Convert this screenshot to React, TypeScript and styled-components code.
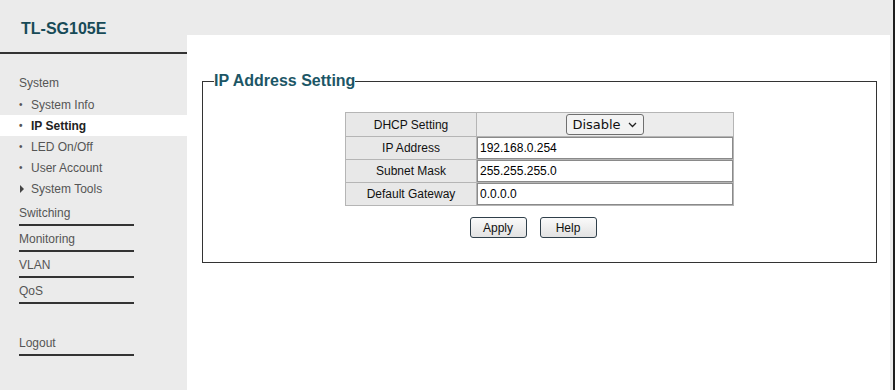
import styled, { createGlobalStyle } from "styled-components";

const GlobalStyle = createGlobalStyle`
    html, body {
        margin: 0;
        padding: 0;
        background: #ebebeb;
    }
    body {
        font-family: "Liberation Sans", Arial, sans-serif;
        font-size: 12px;
        color: #333;
    }
`

const Page = styled.div`
    display: grid;
    grid-template-columns: 187px 1fr;
    height: 390px;
    border-right: 2px solid #1e1e1e;
    box-sizing: border-box;
`

const Sidebar = styled.nav`
    background: #ebebeb;
`

const Brand = styled.div`
    height: 54px;
    box-sizing: border-box;
    padding: 20px 0 0 21px;
    border-bottom: 2px solid #333;
    font-size: 16px;
    font-weight: bold;
    color: #174a57;
`

const Menu = styled.ul`
    list-style: none;
    margin: 0;
    padding: 19px 0 0 0;
`

const Section = styled.li<{ $line?: boolean; $gap?: number }>`
    margin: ${(p) => p.$gap ?? 0}px 0 0 19px;
    width: 115px;
    height: ${(p) => (p.$line ? 23 : 21)}px;
    line-height: 20px;
    font-size: 12px;
    color: #555;
    border-bottom: ${(p) => (p.$line ? "2px solid #333" : "none")};
    box-sizing: border-box;
`

const Item = styled.li<{ $active?: boolean }>`
    display: flex;
    align-items: center;
    height: 21px;
    padding-left: 19px;
    font-size: 12px;
    color: ${(p) => (p.$active ? "#222" : "#555")};
    font-weight: ${(p) => (p.$active ? "bold" : "normal")};
    background: ${(p) => (p.$active ? "#fff" : "transparent")};
`

const Bullet = styled.span`
    width: 12px;
    font-size: 10px;
    color: #555;
`

const Arrow = styled.span`
    width: 12px;
    display: inline-flex;
    align-items: center;
    &::before {
        content: "";
        border-left: 4px solid #444;
        border-top: 4px solid transparent;
        border-bottom: 4px solid transparent;
        margin-left: 1px;
    }
`

const Main = styled.main`
    margin: 35px 3px 0 0;
    background: #fff;
    padding: 37px 13px 0 15px;
`

const Fieldset = styled.fieldset`
    margin: 0;
    padding: 22px 0 24px 0;
    border: 1px solid #333;
    display: flex;
    flex-direction: column;
    align-items: center;
`

const Legend = styled.legend`
    margin-left: 11px;
    padding: 0;
    font-size: 16px;
    font-weight: bold;
    color: #1c5666;
`

const Table = styled.table`
    border-collapse: collapse;
    border: 1px solid #a9a9a9;
    width: 389px;
`

const Label = styled.td`
    width: 130px;
    height: 22px;
    padding: 0;
    text-align: center;
    background: #e8e8e8;
    border: 1px solid #b5b5b5;
    color: #111;
    font-size: 12px;
`

const Value = styled.td<{ $center?: boolean }>`
    padding: 0;
    border: 1px solid #b5b5b5;
    background: #ececec;
    text-align: ${(p) => (p.$center ? "center" : "left")};
`

const Field = styled.input`
    display: block;
    width: 100%;
    height: 22px;
    box-sizing: border-box;
    margin: 0;
    padding: 0 2px;
    border: 1px solid #8a8a8a;
    background: #fff;
    font-family: "Liberation Sans", Arial, sans-serif;
    font-size: 12px;
    color: #000;
    outline: none;
`

const Select = styled.div`
    display: inline-flex;
    align-items: center;
    gap: 7px;
    height: 21px;
    margin: 1px 0;
    padding: 0 6px 0 5px;
    border: 1px solid #6f6f6f;
    border-radius: 3px;
    background: #f3f3f3;
    font-family: "DejaVu Sans", "Noto Sans", sans-serif;
    font-size: 13px;
    color: #111;
    box-sizing: border-box;
`

const Buttons = styled.div`
    display: flex;
    gap: 13px;
    margin: 11px 13px 0 0;
`

const Button = styled.button`
    width: 57px;
    height: 21px;
    padding: 0;
    border: 1px solid #2f3f4a;
    border-radius: 3px;
    background: linear-gradient(#fafafa, #e2e2e2);
    font-family: "Liberation Sans", Arial, sans-serif;
    font-size: 12px;
    color: #111;
`

const Chevron = () => (
    <svg width="9" height="6" viewBox="0 0 9 6">
        <path d="M1 1l3.5 3.5L8 1" fill="none" stroke="#222" strokeWidth="1.3" />
    </svg>
)

export default function App() {
    return (
        <>
            <GlobalStyle />
            <Page>
                <Sidebar>
                    <Brand>TL-SG105E</Brand>
                    <Menu>
                        <Section>System</Section>
                        <Item><Bullet>•</Bullet>System Info</Item>
                        <Item $active><Bullet>•</Bullet>IP Setting</Item>
                        <Item><Bullet>•</Bullet>LED On/Off</Item>
                        <Item><Bullet>•</Bullet>User Account</Item>
                        <Item><Arrow />System Tools</Item>
                        <Section $line $gap={4}>Switching</Section>
                        <Section $line $gap={3}>Monitoring</Section>
                        <Section $line $gap={3}>VLAN</Section>
                        <Section $line $gap={3}>QoS</Section>
                        <Section $line $gap={29}>Logout</Section>
                    </Menu>
                </Sidebar>
                <Main>
                    <Fieldset>
                        <Legend>IP Address Setting</Legend>
                        <Table>
                            <tbody>
                                <tr>
                                    <Label>DHCP Setting</Label>
                                    <Value $center>
                                        <Select>Disable <Chevron /></Select>
                                    </Value>
                                </tr>
                                <tr>
                                    <Label>IP Address</Label>
                                    <Value><Field defaultValue="192.168.0.254" /></Value>
                                </tr>
                                <tr>
                                    <Label>Subnet Mask</Label>
                                    <Value><Field defaultValue="255.255.255.0" /></Value>
                                </tr>
                                <tr>
                                    <Label>Default Gateway</Label>
                                    <Value><Field defaultValue="0.0.0.0" /></Value>
                                </tr>
                            </tbody>
                        </Table>
                        <Buttons>
                            <Button>Apply</Button>
                            <Button>Help</Button>
                        </Buttons>
                    </Fieldset>
                </Main>
            </Page>
        </>
    )
}
